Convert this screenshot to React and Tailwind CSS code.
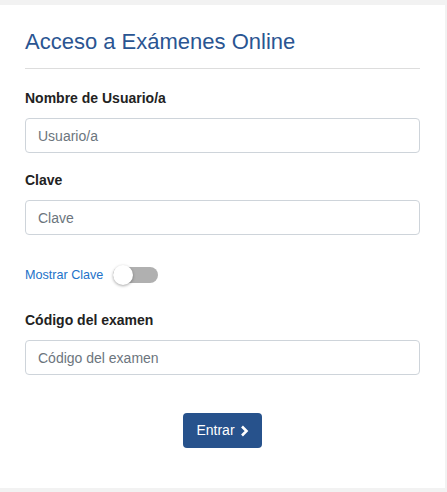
export default function App() {
  return (
    <div className="min-h-[492px] bg-[#f2f2f2] pt-[5px] pb-[4px] pr-[2px] font-['Liberation_Sans',Arial,sans-serif]">
      <div className="bg-white h-[483px] px-[25px] pt-[24px]">
        <h2 className="text-[22px] leading-[26px] text-[#2a5592] mb-[13px]">Acceso a Exámenes Online</h2>
        <hr className="border-0 border-t border-[#dddddd]" />

        <label className="block mt-[19px] text-[14px] leading-[20px] font-bold text-[#222]">Nombre de Usuario/a</label>
        <input
          className="mt-[10px] block w-full h-[35px] px-[12px] text-[14px] border border-[#ced4da] rounded-[4px] placeholder:text-[#6c757d] outline-none"
          placeholder="Usuario/a"
        />

        <label className="block mt-[17px] text-[14px] leading-[20px] font-bold text-[#222]">Clave</label>
        <input
          type="password"
          className="mt-[10px] block w-full h-[35px] px-[12px] text-[14px] border border-[#ced4da] rounded-[4px] placeholder:text-[#6c757d] outline-none"
          placeholder="Clave"
        />

        <div className="mt-[30px] flex items-center gap-[10px] h-[20px]">
          <span className="text-[12.6px] text-[#2272c9]">Mostrar Clave</span>
          <div className="relative w-[45px] h-[16px] rounded-full bg-[#b0b0b0]">
            <div className="absolute left-0 top-[-2px] w-[20px] h-[20px] rounded-full bg-white shadow-[0_1px_3px_rgba(0,0,0,0.35)]" />
          </div>
        </div>

        <label className="block mt-[25px] text-[14px] leading-[20px] font-bold text-[#222]">Código del examen</label>
        <input
          className="mt-[10px] block w-full h-[35px] px-[12px] text-[14px] border border-[#ced4da] rounded-[4px] placeholder:text-[#6c757d] outline-none"
          placeholder="Código del examen"
        />

        <div className="flex justify-center mt-[38px]">
          <button className="flex items-center gap-[5px] h-[35px] px-[13px] bg-[#27528c] text-white text-[14px] rounded-[4px]">
            Entrar
            <svg width="9" height="12" viewBox="0 0 9 12" fill="none">
              <path d="M2 1.5 L6.5 6 L2 10.5" stroke="white" strokeWidth="2.6" />
            </svg>
          </button>
        </div>
      </div>
    </div>
  );
}
